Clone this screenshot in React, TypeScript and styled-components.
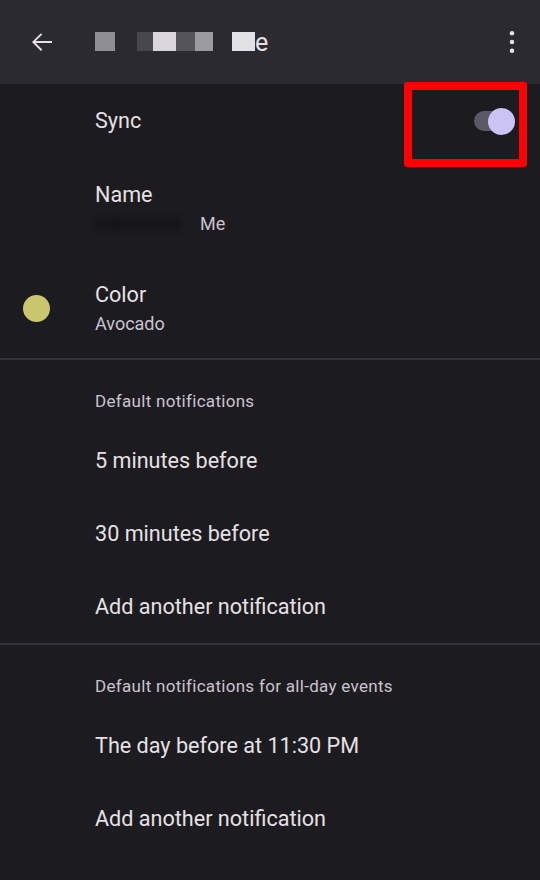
import React from "react";
import styled, { createGlobalStyle } from "styled-components";

const Global = createGlobalStyle`
  html, body { margin: 0; padding: 0; background: #1c1b1f; }
  body { font-family: Roboto, "Noto Sans", sans-serif; }
  * { box-sizing: border-box; }
`;

const Screen = styled.div`
  width: 540px;
  height: 880px;
  background: #1c1b1f;
  color: #e6e1e5;
  position: relative;
  overflow: hidden;
`;

const TopBar = styled.header`
  height: 84px;
  background: #2b2a31;
  display: flex;
  align-items: center;
  padding: 0 15px 0 27px;
`;

const IconBtn = styled.div<{ $size: number }>`
  width: ${(p) => p.$size}px;
  height: ${(p) => p.$size}px;
  display: flex;
  align-items: center;
  justify-content: center;
  color: #e6e1e5;
`;

const Title = styled.div`
  flex: 1;
  display: flex;
  align-items: center;
  margin-left: 38px;
  font-size: 25px;
  height: 26px;
`;

const Redact = styled.span<{ $w: number; $c: string; $gap?: number }>`
  display: inline-block;
  width: ${(p) => p.$w}px;
  height: 19px;
  margin-top: -2px;
  background: ${(p) => p.$c};
  margin-left: ${(p) => p.$gap ?? 0}px;
`;

const Row = styled.div<{ $h: number }>`
  height: ${(p) => p.$h}px;
  display: flex;
  align-items: center;
  padding-left: 95px;
  padding-right: 30px;
  position: relative;
`;

const TextCol = styled.div`
  flex: 1;
  display: flex;
  flex-direction: column;
  gap: 5px;
`;

const Primary = styled.div`
  font-size: 21.6px;
  line-height: 26px;
  color: #e6e1e5;
`;

const Secondary = styled.div`
  font-size: 18px;
  line-height: 22px;
  color: #cac4d0;
  display: flex;
  align-items: center;
`;

const Blur = styled.span<{ $w: number }>`
  display: inline-block;
  width: ${(p) => p.$w}px;
  height: 14px;
  background: #161518;
  filter: blur(2px);
`;

const Dot = styled.span`
  position: absolute;
  left: 23px;
  width: 27px;
  height: 27px;
  border-radius: 50%;
  background: #c9c66e;
`;

const Divider = styled.hr`
  margin: 0;
  border: none;
  height: 2px;
  background: #333238;
`;

const SectionHead = styled.div`
  height: 64px;
  padding: 31px 0 0 95px;
  font-size: 17px;
  line-height: 20px;
  letter-spacing: 0.3px;
  color: #cac4d0;
`;

const Toggle = styled.div`
  position: relative;
  width: 41px;
  height: 27px;
  margin-right: -5px;
  display: flex;
  align-items: center;
`;

const Track = styled.span`
  width: 36px;
  height: 20px;
  border-radius: 10px;
  background: #5b5966;
`;

const Thumb = styled.span`
  position: absolute;
  right: 0;
  top: 0;
  width: 27px;
  height: 27px;
  border-radius: 50%;
  background: #cbc3f4;
`;

const Highlight = styled.div`
  position: absolute;
  left: 404px;
  top: 82px;
  width: 123px;
  height: 85px;
  border: 8px solid #ff0000;
  border-radius: 3px;
`;

export default function App() {
  return (
    <>
      <Global />
      <Screen>
        <TopBar>
          <IconBtn $size={30}>
            <svg width="30" height="30" viewBox="0 0 24 24" fill="currentColor">
              <path d="M20 11.25H6.9l5.3-5.3-1.05-1.05L4 12l7.15 7.1 1.05-1.05-5.3-5.3H20z" />
            </svg>
          </IconBtn>
          <Title>
            <Redact $w={20} $c="#8f8e94" />
            <Redact $w={16} $c="#48474e" $gap={22} />
            <Redact $w={23} $c="#d9d7dd" />
            <Redact $w={19} $c="#55545b" />
            <Redact $w={18} $c="#9b9aa1" />
            <Redact $w={23} $c="#e2e1e6" $gap={19} />
            <span>e</span>
          </Title>
          <IconBtn $size={26}>
            <svg width="26" height="26" viewBox="0 0 24 24" fill="currentColor">
              <circle cx="12" cy="4" r="2.1" />
              <circle cx="12" cy="12" r="2.1" />
              <circle cx="12" cy="20" r="2.1" />
            </svg>
          </IconBtn>
        </TopBar>

        <Row $h={74}>
          <TextCol>
            <Primary>Sync</Primary>
          </TextCol>
          <Toggle>
            <Track />
            <Thumb />
          </Toggle>
        </Row>

        <Row $h={100}>
          <TextCol>
            <Primary>Name</Primary>
            <Secondary>
              <Blur $w={26} />
              <Blur $w={60} />
              <span style={{ marginLeft: 19 }}>Me</span>
            </Secondary>
          </TextCol>
        </Row>

        <Row $h={100}>
          <Dot />
          <TextCol>
            <Primary>Color</Primary>
            <Secondary>Avocado</Secondary>
          </TextCol>
        </Row>

        <Divider />
        <SectionHead>Default notifications</SectionHead>
        <Row $h={73}>
          <Primary>5 minutes before</Primary>
        </Row>
        <Row $h={73}>
          <Primary>30 minutes before</Primary>
        </Row>
        <Row $h={73}>
          <Primary>Add another notification</Primary>
        </Row>

        <Divider />
        <SectionHead>Default notifications for all-day events</SectionHead>
        <Row $h={73}>
          <Primary>The day before at 11:30 PM</Primary>
        </Row>
        <Row $h={73}>
          <Primary>Add another notification</Primary>
        </Row>

        <Highlight />
      </Screen>
    </>
  );
}
